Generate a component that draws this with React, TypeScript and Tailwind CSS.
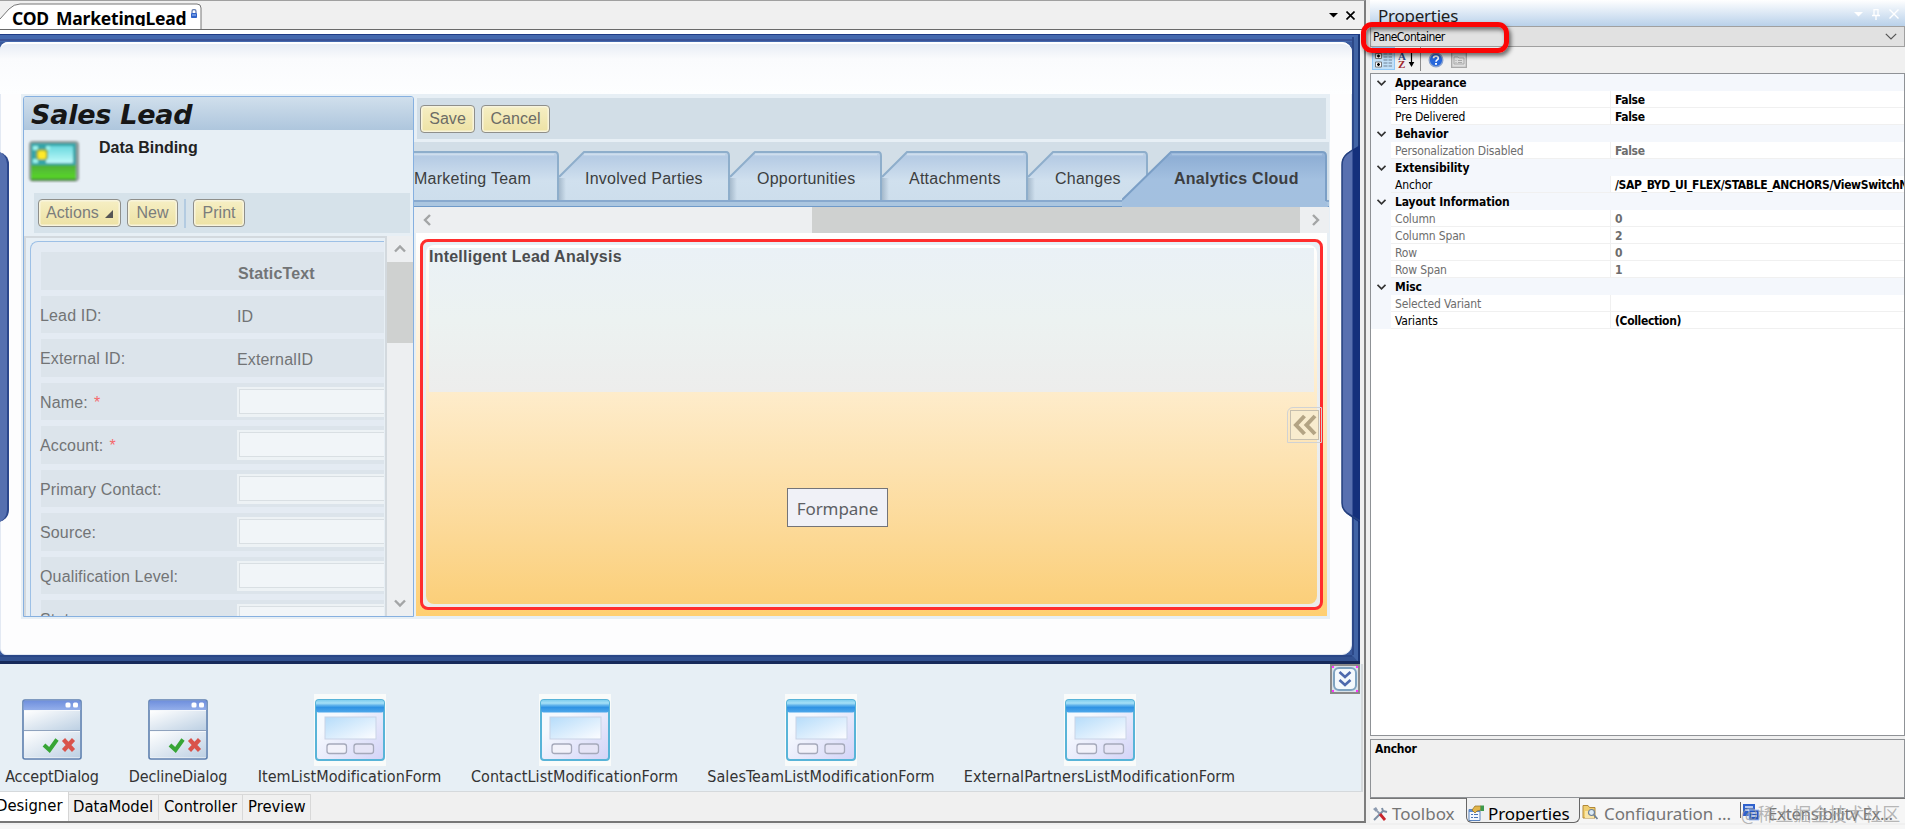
import type { ReactNode } from "react"

const TAHOMA = "font-['DejaVu_Sans_Condensed','DejaVu_Sans',sans-serif]"
const SEGOE = "font-['Noto_Sans',sans-serif]"

type FormRow = { label: string; kind: "header" | "text" | "input"; value?: string; required?: boolean }

const formRows: FormRow[] = [
  { label: "", kind: "header", value: "StaticText" },
  { label: "Lead ID:", kind: "text", value: "ID" },
  { label: "External ID:", kind: "text", value: "ExternalID" },
  { label: "Name:", kind: "input", required: true },
  { label: "Account:", kind: "input", required: true },
  { label: "Primary Contact:", kind: "input" },
  { label: "Source:", kind: "input" },
  { label: "Qualification Level:", kind: "input" },
  { label: "Status:", kind: "input" },
]

const viewTabs = [
  { label: "Marketing Team", width: 145, pad: "pl-0", first: true },
  { label: "Involved Parties", width: 171, pad: "pl-[26px]" },
  { label: "Opportunities", width: 152, pad: "pl-[27px]" },
  { label: "Attachments", width: 146, pad: "pl-[27px]" },
  { label: "Changes", width: 120, pad: "pl-[27px]" },
]

const trayItems = [
  { label: "AcceptDialog", width: "w-[94px]", dialog: true },
  { label: "DeclineDialog", width: "w-[98px]", dialog: true },
  { label: "ItemListModificationForm", width: "w-[185px]" },
  { label: "ContactListModificationForm", width: "w-[205px]" },
  { label: "SalesTeamListModificationForm", width: "w-[228px]" },
  { label: "ExternalPartnersListModificationForm", width: "w-[269px]" },
]

type PropRow = { name: string; value?: string; category?: boolean; muted?: boolean; active?: boolean }

const propRows: PropRow[] = [
  { name: "Appearance", category: true },
  { name: "Pers Hidden", value: "False" },
  { name: "Pre Delivered", value: "False" },
  { name: "Behavior", category: true },
  { name: "Personalization Disabled", value: "False", muted: true },
  { name: "Extensibility", category: true },
  { name: "Anchor", value: "/SAP_BYD_UI_FLEX/STABLE_ANCHORS/ViewSwitchNavigation", active: true },
  { name: "Layout Information", category: true },
  { name: "Column", value: "0", muted: true },
  { name: "Column Span", value: "2", muted: true },
  { name: "Row", value: "0", muted: true },
  { name: "Row Span", value: "1", muted: true },
  { name: "Misc", category: true },
  { name: "Selected Variant", value: "", muted: true },
  { name: "Variants", value: "(Collection)" },
]

function Chevron({ d, className = "" }: { d: string; className?: string }) {
  return (
    <svg width="14" height="14" viewBox="0 0 14 14" className={className} fill="none" stroke="#a3a5a6" strokeWidth="2.4">
      <path d={d} />
    </svg>
  )
}

function SapButton({ children, className = "" }: { children: ReactNode; className?: string }) {
  return (
    <div
      className={`flex h-7 items-center justify-center rounded border-[1.5px] border-[#8f8f8b] bg-gradient-to-b from-[#f6efc4] to-[#ede2a4] text-base tracking-[0.050px] shadow-[inset_0_0_0_1.5px_#f8f4dc] ${className}`}
    >
      {children}
    </div>
  )
}

function PictureIcon() {
  return (
    <svg width="54" height="44" viewBox="0 0 54 44">
      <defs>
        <linearGradient id="sky" x1="0" y1="0" x2="0" y2="1">
          <stop offset="0" stopColor="#69d8de" />
          <stop offset="1" stopColor="#c0fafa" />
        </linearGradient>
        <linearGradient id="grass" x1="0" y1="0" x2="0" y2="1">
          <stop offset="0" stopColor="#4fae3a" />
          <stop offset="1" stopColor="#5ad927" />
        </linearGradient>
        <filter id="soft">
          <feGaussianBlur stdDeviation="0.9" />
        </filter>
      </defs>
      <g filter="url(#soft)">
        <rect x="2" y="2" width="50" height="40.500" rx="4" fill="#8f9a98" />
        <rect x="4" y="4" width="45" height="22" rx="1" fill="#36a4a8" />
        <rect x="19" y="7" width="27" height="17" rx="1" fill="url(#sky)" />
        <path d="M6 7h5v4H6zM6 20h5v4H6zM19 7h4v4h-4z" fill="#9af3ee" />
        <path d="M4 26h45v14H4z" fill="url(#grass)" />
        <path d="M4 39.500h45v2H4z" fill="#43912b" />
        <rect x="9" y="10" width="12" height="11" rx="3" fill="#8fae3c" />
        <rect x="11" y="12" width="8" height="8" rx="2" fill="#ffe92c" />
      </g>
    </svg>
  )
}

function SalesLeadPanel() {
  return (
    <div className="flex h-[521px] w-[391px] flex-col overflow-hidden rounded-t-[3px] border border-[#86b0e0] bg-[#e7eff5]">
      <div className="h-[33px] shrink-0 bg-gradient-to-b from-[#d0dfec] to-[#aec6dd] pl-[7px]">
        <span className="block font-['DejaVu_Sans'] text-[27px] leading-[35px] font-bold tracking-[-0.250px] text-[#161616] italic">
          Sales Lead
        </span>
      </div>
      <div className="flex h-[63px] shrink-0 pl-[3px]">
        <div className="pt-[9px]">
          <PictureIcon />
        </div>
        <div className="pt-[8px] pl-[18px] text-base leading-[19px] font-bold text-[#222]">Data Binding</div>
      </div>
      <div className="mr-[3px] ml-[10px] flex h-10 shrink-0 items-center bg-[#d6e2ea] pl-1 text-[#7b7d7c]">
        <SapButton className="w-[83px] gap-1.5">
          Actions
          <svg width="8" height="8" viewBox="0 0 8 8" className="mt-0.5">
            <path d="M8 0v8H0z" fill="#555" />
          </svg>
        </SapButton>
        <SapButton className="ml-1.5 w-[51px]">New</SapButton>
        <div className="ml-[6px] h-[29px] w-0.5 bg-[#b3cbe1]" />
        <SapButton className="ml-[7px] w-[52px]">Print</SapButton>
      </div>
      <div className="mt-[3px] flex min-h-0 flex-1">
        <div className="flex min-w-0 flex-1 overflow-hidden border-t-2 border-r-2 border-l-2 border-[#d3d9de] pt-[3px] pl-[4px]">
          <div className="mr-px flex h-[500px] flex-1 flex-col gap-1.5 rounded-tl-lg border-t border-l border-[#9dc0e6] bg-[#e4ebf3] pt-[10px] pl-[10px]">
            {formRows.map((row, i) => (
              <div key={i} className="flex h-[37.500px] shrink-0 bg-[#dce4eb] text-base tracking-[0.150px] text-[#727476]">
                <div className="-ml-px w-[197px] pt-[10px] leading-[19px] whitespace-nowrap">
                  {row.label}
                  {row.required && <span className="ml-[6px] text-[#f5686c]">*</span>}
                </div>
                {row.kind === "input" ? (
                  <div className="mt-1 h-[30px] flex-1 border-t-2 border-b-[3px] border-l-2 border-[#edf2f5] bg-[#f1f5f8]">
                    <div className="h-full border-t border-b border-l border-[#d9dfe3]" />
                  </div>
                ) : (
                  <div
                    className={
                      row.kind === "header"
                        ? "pt-[12px] pl-px text-base leading-[19px] font-bold"
                        : "pt-[12px] leading-[18px]"
                    }
                  >
                    {row.value}
                  </div>
                )}
              </div>
            ))}
          </div>
        </div>
        <div className="flex w-[26px] flex-col items-center bg-[#edeff1]">
          <div className="flex h-[26px] items-center">
            <Chevron d="M2 9.500l5-5 5 5" />
          </div>
          <div className="h-[81px] w-full bg-[#cfd1d0]" />
          <div className="flex-1" />
          <div className="flex h-[26px] items-center">
            <Chevron d="M2 4.500l5 5 5-5" />
          </div>
        </div>
      </div>
    </div>
  )
}

function TabShape({ width, first }: { width: number; first?: boolean }) {
  const outline = first
    ? `M0 1H${width - 4}q3 0 3 4V49`
    : `M0 49V26L25 1H${width - 4}q3 0 3 4V49`
  return (
    <svg width={width} height="49" className="absolute top-0 left-0">
      <defs>
        <linearGradient id="tabFill" x1="0" y1="0" x2="0" y2="1">
          <stop offset="0" stopColor="#c7d8ea" />
          <stop offset="0.100" stopColor="#b5cbe4" />
          <stop offset="0.600" stopColor="#d0e0ee" />
          <stop offset="1" stopColor="#cddeec" />
        </linearGradient>
        <linearGradient id="tabShade" x1="0" y1="0" x2="1" y2="0">
          <stop offset="0" stopColor="#93a9bd" stopOpacity="0.700" />
          <stop offset="1" stopColor="#93a9bd" stopOpacity="0" />
        </linearGradient>
      </defs>
      <path d={`${outline}${first ? "H0z" : "z"}`} fill="url(#tabFill)" />
      {!first && <path d="M0 27h7v22H0z" fill="url(#tabShade)" />}
      <path d={first ? outline : `M0 26L25 1H${width - 4}q3 0 3 4V49`} fill="none" stroke="#8eaecb" strokeWidth="2" />
      <path d={first ? `M0 3.500H${width - 5}` : `M25 3.500H${width - 5}`} stroke="#cfdeed" strokeWidth="1.500" />
    </svg>
  )
}

function ViewTabs() {
  return (
    <div className="flex h-[65px] flex-col bg-[#d2dee7] pt-[9px]">
      <div className="relative flex h-[49px] text-base text-[#3c3e40]">
        {viewTabs.map((tab) => (
          <div
            key={tab.label}
            className={`relative shrink-0 leading-[55px] tracking-[0.250px] whitespace-nowrap ${tab.pad}`}
            style={{ width: tab.width }}
          >
            <TabShape width={tab.width} first={tab.first} />
            <span className="relative">{tab.label}</span>
          </div>
        ))}
        <div className="relative flex-1 pl-[26px] text-base leading-[55px] font-bold tracking-[0.250px]">
          <svg width="206" height="56" className="absolute top-0 -left-[26px]">
            <defs>
              <linearGradient id="activeTab" x1="0" y1="0" x2="0" y2="1">
                <stop offset="0" stopColor="#9db9dc" />
                <stop offset="0.100" stopColor="#8fafd5" />
                <stop offset="0.500" stopColor="#a3c0e0" />
                <stop offset="1" stopColor="#a3c0df" />
              </linearGradient>
            </defs>
            <path d="M0 56V49L49 1H200q4 0 4 4V50l2 6z" fill="url(#activeTab)" />
            <path d="M0 49L49 1H200q4 0 4 4V50" fill="none" stroke="#7b9fc6" strokeWidth="2" />
            <path d="M50 3.500H200" stroke="#a9c4e1" strokeWidth="1.500" />
          </svg>
          <span className="relative">Analytics Cloud</span>
        </div>
      </div>
      <div className="h-[7px] border-t-2 border-b border-t-[#88a9ce] border-b-[#6f9ac9] bg-[#abc6e0]" />
    </div>
  )
}

function AnalysisPane() {
  return (
    <div className="mr-[2px] ml-[2px] h-[383px] bg-gradient-to-b from-white to-[#ffcf71] px-1 pt-[6px] pb-[6px]">
      <div className="h-[371px] rounded-lg border-[3px] border-[#ff2d2d] bg-gradient-to-b from-[#e8eff5] to-[#ececea] px-[3px] pt-[3px] pb-[3px]">
        <div className="relative h-full rounded-lg bg-gradient-to-b from-white to-[#fbcf79] px-[3px] pt-[3px]">
          <div className="h-[144px] bg-gradient-to-b from-[#eaf1f6] via-[#ecf2f1] to-[#ededec] text-base leading-[18px] font-bold tracking-[0.230px] text-[#4a4c4e]">
            Intelligent Lead Analysis
          </div>
          <div className="absolute top-[162px] -right-[5px] h-[36px] w-[35px] rounded-tl-md border border-[#d0d2d4] p-[2px]">
            <div className="flex h-full items-center justify-center border border-[#c6bfae] bg-[#f8ecce]">
              <svg width="25" height="22" viewBox="0 0 25 22" fill="none" stroke="#b3a484" strokeWidth="4">
                <path d="M12.500 2L4 11l8.500 9M23 2l-8.500 9 8.500 9" />
              </svg>
            </div>
          </div>
          <div
            className={`absolute top-[243px] left-[361px] flex h-[39px] w-[101px] items-center justify-center border-[1.5px] border-[#747478] bg-[#f0f1f7] pt-0.5 text-[17px] tracking-[-0.050px] text-[#5d6064] ${SEGOE}`}
          >
            Formpane
          </div>
        </div>
      </div>
    </div>
  )
}

function MainForm() {
  return (
    <div className="relative ml-[21px] flex h-[525px] w-[1309px] bg-[#e7eff5] pt-[2px] pl-[2px] font-['Liberation_Sans',sans-serif]">
      <SalesLeadPanel />
      <div className="min-w-0 flex-1">
        <div className="mt-[2px] mr-[4px] ml-[3px] flex h-[41px] items-center gap-1.5 bg-[#d2dee7] pl-[3px] text-[#6c6c66]">
          <SapButton className="w-[55px]">Save</SapButton>
          <SapButton className="w-[69px]">Cancel</SapButton>
        </div>
        <div className="mt-[3px] mr-px">
          <ViewTabs />
          <div className="flex h-[26px] items-center bg-[#edeff1]">
            <Chevron d="M9 2L4 7l5 5" className="ml-[7px]" />
            <div className="flex-1" />
            <div className="h-full w-[488px] bg-[#cfd1d0]" />
            <Chevron d="M5 2l5 5-5 5" className="mr-[7px] ml-2" />
          </div>
          <AnalysisPane />
        </div>
      </div>
    </div>
  )
}

function DialogIcon() {
  return (
    <svg width="60" height="61" viewBox="0 0 60 61">
      <defs>
        <linearGradient id="dlgBar" x1="0" y1="0" x2="0" y2="1">
          <stop offset="0" stopColor="#6f8fdd" />
          <stop offset="1" stopColor="#93aeea" />
        </linearGradient>
        <linearGradient id="dlgBody" x1="0" y1="0" x2="1" y2="1">
          <stop offset="0" stopColor="#fff" />
          <stop offset="1" stopColor="#bdd0e3" />
        </linearGradient>
      </defs>
      <rect x="1" y="1" width="58" height="59" rx="2" fill="#f5f8fb" stroke="#5d7fae" strokeWidth="1.600" />
      <rect x="1.500" y="1.500" width="57" height="9.500" fill="url(#dlgBar)" />
      <rect x="43.500" y="3.500" width="5" height="5" rx="1.500" fill="#fff" />
      <rect x="51" y="3.500" width="5" height="5" rx="1.500" fill="#fff" />
      <rect x="2" y="12" width="56" height="19" fill="url(#dlgBody)" />
      <path d="M2 31.500h56" stroke="#8fa2bd" />
      <rect x="2" y="33" width="56" height="25.500" fill="url(#dlgBody)" />
      <path d="M22 46l5.500 5L35 40.500" fill="none" stroke="#37a535" strokeWidth="4" />
      <path d="M41.500 40.500l10 11M51.500 40.500l-10 11" stroke="#d9534b" strokeWidth="4.200" />
    </svg>
  )
}

function FormIcon() {
  return (
    <svg width="72" height="72" viewBox="0 0 72 72">
      <defs>
        <linearGradient id="frmBar" x1="0" y1="0" x2="0" y2="1">
          <stop offset="0" stopColor="#7fcdee" />
          <stop offset="0.250" stopColor="#a5e0f7" />
          <stop offset="0.450" stopColor="#58aeea" />
          <stop offset="0.600" stopColor="#2f93e4" />
          <stop offset="1" stopColor="#4fa8ea" />
        </linearGradient>
        <linearGradient id="frmBody" x1="0" y1="0" x2="1" y2="1">
          <stop offset="0.300" stopColor="#f5f9fe" />
          <stop offset="1" stopColor="#d3d3f7" />
        </linearGradient>
        <linearGradient id="frmPic" x1="0" y1="0" x2="1" y2="1">
          <stop offset="0" stopColor="#b5dcfa" />
          <stop offset="1" stopColor="#fdfdff" />
        </linearGradient>
      </defs>
      <path d="M0 0h72v72H0z" fill="#f9fbfa" />
      <rect x="2" y="6" width="68" height="60" rx="3" fill="url(#frmBody)" stroke="#58b4d8" strokeWidth="2" />
      <rect x="2" y="6" width="68" height="12.500" rx="2.500" fill="url(#frmBar)" />
      <rect x="11" y="23" width="51" height="22" fill="url(#frmPic)" stroke="#c9d3e6" />
      <rect x="13" y="50" width="19.500" height="9.500" rx="2.500" fill="#f2f2fa" stroke="#a5a9ba" strokeWidth="1.300" />
      <rect x="40" y="50" width="19.500" height="9.500" rx="2.500" fill="#e6e5f6" stroke="#a5a9ba" strokeWidth="1.300" />
    </svg>
  )
}

function ComponentTray() {
  return (
    <div className="relative mr-px flex h-[128px] gap-[30px] border-r-2 border-b border-[#d5d9dc] bg-[#e7eff5] pl-[5px]">
      {trayItems.map((item) => (
        <div key={item.label} className={`flex shrink-0 flex-col items-center ${item.width}`}>
          <div className={item.dialog ? "h-[102px] pt-[35px]" : "h-[102px] pt-[30px]"}>
            {item.dialog ? <DialogIcon /> : <FormIcon />}
          </div>
          <span
            className={`text-base leading-[21px] whitespace-nowrap text-[#333] ${item.dialog ? "tracking-[-0.100px]" : "tracking-[0.080px]"} ${TAHOMA}`}
          >
            {item.label}
          </span>
        </div>
      ))}
      <div className="absolute top-0 right-px h-[30px] w-[30px] border-2 border-[#8a8a8a] bg-[#d9e2e8] p-px">
        <div className="flex h-full items-center justify-center rounded-md border-2 border-[#7fa3c0] bg-[#f4f9fc]">
          <svg width="14" height="18" viewBox="0 0 14 18" fill="none" stroke="#4d69ad" strokeWidth="2.600">
            <path d="M1.500 2L7 7l5.500-5M1.500 10L7 15l5.500-5" />
          </svg>
        </div>
        <i className="absolute top-0 left-0 size-[2px] bg-[#f3f]" />
        <i className="absolute top-0 right-0 size-[2px] bg-[#f3f]" />
        <i className="absolute bottom-0 left-0 size-[2px] bg-[#f3f]" />
        <i className="absolute right-0 bottom-0 size-[2px] bg-[#f3f]" />
      </div>
    </div>
  )
}

// blue grips on both sides of the work area
function SideGrip({ side }: { side: "left" | "right" }) {
  return side === "left" ? (
    <div className="absolute top-[110px] left-0 h-[370px] w-[10px] overflow-hidden">
      <div className="ml-[-16px] h-full w-[25px] rounded-xl border-r-2 border-[#2b478c] bg-[#5570b0]" />
    </div>
  ) : (
    <div className="absolute top-[103px] right-0 h-[380px] w-[19px]">
      <svg width="19" height="380" viewBox="0 0 19 380">
        <path d="M19 0L6 8Q1 12 1 20V358Q1 365 6 369L19 378z" fill="#14307c" />
        <path d="M11.500 5L6 9Q1 13 1 20V358Q1 364 6 368L11.500 371z" fill="#5870b0" />
        <path d="M11.500 5L6 9Q1 13 1 20V358Q1 364 6 368L19 376" fill="none" stroke="#24407f" strokeWidth="1.500" />
      </svg>
    </div>
  )
}

function DesignerTabs() {
  return (
    <div className={`flex h-[29px] text-[16.500px] leading-[23px] whitespace-nowrap text-black ${TAHOMA}`}>
      <div className="w-[69px] overflow-hidden border-r border-[#d5d5d5] bg-white">
        <span className="-ml-1 block leading-[28px]">Designer</span>
      </div>
      <div className="mt-[2px] h-[26px] w-[90px] border-t border-r border-[#d8d8d8] pl-1">DataModel</div>
      <div className="mt-[2px] h-[26px] w-[84px] border-t border-r border-[#d8d8d8] pl-[5px]">Controller</div>
      <div className="mt-[2px] h-[26px] w-[68px] border-t border-r border-[#d8d8d8] pl-[5px]">Preview</div>
    </div>
  )
}

function Workspace() {
  return (
    <div className="flex h-[823px] w-[1366px] flex-col border-t border-r-2 border-b-2 border-t-[#a0a0a0] border-r-[#7d7d7d] border-b-[#777] bg-[#f0f0f0]">
      <div className="relative flex h-[29px] shrink-0 justify-between border-b border-[#6a6a6a]">
        <svg width="202" height="28" className="absolute top-0 left-0">
          <path d="M0 18L9 8q5-5 11-5H197q4 0 4 4V28H0z" fill="#fff" />
          <path d="M0 18L9 8q5-5 11-5H197q4 0 4 4V28" fill="none" stroke="#777" />
        </svg>
        <div className={`relative h-[25px] overflow-hidden pl-[12px] text-[17.500px] leading-[34px] font-bold tracking-[-0.200px] ${SEGOE}`}>
          COD_MarketingLead
        </div>
        <svg width="8" height="10" viewBox="0 0 8 10" className="absolute top-2 left-[190px]">
          <path d="M2 4V2.500a2 2 0 0 1 4 0V4" fill="none" stroke="#6b83b5" strokeWidth="1.300" />
          <rect x="1" y="4" width="6" height="5" rx="0.800" fill="#2f63c9" />
          <path d="M2 6h4" stroke="#a9c4f5" />
        </svg>
        <div className="flex items-center gap-2 pr-[9px]">
          <svg width="9" height="5" viewBox="0 0 9 5">
            <path d="M0 0h9L4.500 4.500z" />
          </svg>
          <svg width="9" height="9" viewBox="0 0 9 9" stroke="#000" strokeWidth="1.600">
            <path d="M.5.5l8 8M8.500.5l-8 8" />
          </svg>
        </div>
      </div>
      <div className="h-1 shrink-0 bg-white" />
      <div className="relative mr-[4px] h-[630px] shrink-0 border-t-8 border-r-8 border-b-[9px] border-t-[#4569ae] border-r-[#4164a5] border-b-[#325190] bg-[#3a5a9d]">
        <div className="absolute inset-0 rounded-tl-lg rounded-tr-[10px] rounded-br-[10px] rounded-bl-md border border-[#e3e9f3] bg-[#fdfdfe]" />
        <div className="relative h-[52px] rounded-tl-lg rounded-tr-[10px] border-t-2 border-white bg-gradient-to-b from-[#e8edf5] via-[#fafbfd] via-30% to-[#fdfeff]" />
        <MainForm />
        <i className="absolute -top-2 -right-2 left-0 h-px bg-[#1f3c86]" />
        <i className="absolute -top-[3px] right-0 left-0 h-[2px] bg-[#3a5295]" />
        <i className="absolute -top-[5px] -right-[2px] bottom-0 w-[2px] bg-[#2c4888]" />
        <i className="absolute -top-[7px] -right-2 -bottom-2 w-[2px] bg-[#1c3877]" />
        <i className="absolute right-0 -bottom-[2px] left-0 h-[2px] bg-[#2a4787]" />
        <i className="absolute -right-2 -bottom-[9px] left-0 h-[3px] bg-[#16295a]" />
        <div className="absolute inset-y-0 -right-2 w-[20px]">
          <SideGrip side="right" />
        </div>
        <SideGrip side="left" />
      </div>
      <div>
        <ComponentTray />
        <DesignerTabs />
      </div>
    </div>
  )
}

function PropertyGrid() {
  return (
    <div className={`h-[663px] overflow-hidden border border-[#8f9296] bg-white text-xs text-black ${TAHOMA}`}>
      {propRows.map((row) => (
        <div key={row.name} className="flex h-[17px] bg-[#f4f7fc] leading-[18px] whitespace-nowrap">
          <div className="flex w-5 shrink-0 items-center justify-center">
            {row.category && (
              <svg width="9" height="6" viewBox="0 0 9 6" fill="none" stroke="#333" strokeWidth="1.700">
                <path d="M.5.8l4 4 4-4" />
              </svg>
            )}
          </div>
          {row.category ? (
            <div className="flex-1 pl-1 font-bold tracking-[-0.100px]">{row.name}</div>
          ) : (
            <>
              <div
                className={`w-[220px] shrink-0 border-r border-b border-[#f0f0f0] pl-1 tracking-[-0.150px] ${row.active ? "" : "bg-white"} ${row.muted ? "text-[#6d6d6d]" : ""}`}
              >
                {row.name}
              </div>
              <div
                className={`min-w-0 flex-1 overflow-hidden border-b border-[#f0f0f0] bg-white pl-1 font-bold tracking-[-0.350px] ${row.muted ? "text-[#6d6d6d]" : ""}`}
              >
                {row.value}
              </div>
            </>
          )}
        </div>
      ))}
    </div>
  )
}

function GridToolbar() {
  return (
    <div className="flex h-[26px] shrink-0 items-start pl-[2px]">
      <div className="h-[23px] w-[23px] border border-[#90c8f6] bg-[#c2e0f7] pt-[4px] pl-[2px]">
        <svg width="18" height="16" viewBox="0 0 18 16">
          <path d="M.5 1.500h6v5h-6zM.5 10h6v5h-6z" fill="#fff" stroke="#777" />
          <path d="M2 4h3M3.500 2.500v3M2 12.500h3M3.500 11v3" stroke="#000" strokeWidth="1.300" />
          <path d="M8.500 2h4M8.500 5h4M8.500 8h4M8.500 11h4M8.500 14h4M13.500 2H17M13.500 5H17M13.500 8H17M13.500 11H17M13.500 14H17" stroke="#6f8296" />
        </svg>
      </div>
      <div className="ml-[3px] flex pt-[5px]">
        <div className="w-[8px] font-['Liberation_Serif'] text-[11px] leading-[8px] font-bold">
          <div className="text-[#2c4a8a]">A</div>
          <div className="text-[#a0282c]">Z</div>
        </div>
        <svg width="7" height="16" viewBox="0 0 7 16" className="ml-0.5">
          <path d="M3.500 0v12" stroke="#000" strokeWidth="1.200" />
          <path d="M.7 10h5.600l-2.800 5z" />
        </svg>
      </div>
      <div className="ml-[5px] h-6 w-px bg-[#8d8d8d]" />
      <svg width="16" height="16" viewBox="0 0 16 16" className="mt-[5px] ml-[7px]">
        <circle cx="8" cy="8" r="6.800" fill="#2767dc" stroke="#8ba3cf" strokeWidth="1.400" />
        <path d="M5.500 6.300c.2-3 5-2.800 4.800 0 0 1.700-2.300 1.600-2.300 3.500" fill="none" stroke="#fff" strokeWidth="1.700" />
        <path d="M7 11h2v1.800H7z" fill="#fff" />
      </svg>
      <svg width="16" height="16" viewBox="0 0 16 16" className="mt-[5px] ml-[7px]" fill="none" stroke="#a9a9a9">
        <path d="M.5.5h15v15H.5z" fill="#dedede" strokeWidth="1.600" />
        <path d="M3 5h4l1 1h5v6H3zM4.500 8.500h1M7 8.500h4M4.500 10.500h1M7 10.500h4" />
      </svg>
    </div>
  )
}

function ToolTabs() {
  return (
    <div className={`relative flex h-[25px] shrink-0 border-t border-[#777] bg-[#f6f6f6] text-[17px] leading-[30px] whitespace-nowrap text-[#757575] ${SEGOE}`}>
      <div className="flex h-[22px] w-[96px] overflow-hidden pl-[2px]">
        <svg width="16" height="16" viewBox="0 0 16 16" className="mt-[7px] mr-1" fill="none">
          <path d="M2 14l9-9" stroke="#7d8ea3" strokeWidth="2" />
          <path d="M1 3l3-2 2 3-2 2z" fill="#8d9bb0" />
          <path d="M5 5l4 4" stroke="#8d9bb0" strokeWidth="1.800" />
          <path d="M8 8l5 6" stroke="#c9252c" strokeWidth="2.800" />
          <path d="M10 2l1 3 4 1" stroke="#7d8ea3" strokeWidth="2" />
        </svg>
        <span>Toolbox</span>
      </div>
      <div className="-mt-px flex h-[25px] w-[114px] rounded-b-md border-r border-b border-l border-[#666] bg-[#f0f0f0] pl-px">
        <div className="flex h-[23px] overflow-hidden text-black">
          <svg width="16" height="16" viewBox="0 0 16 16" className="mt-[7px] mr-1">
            <path d="M1 4.500h11v11H1z" fill="#f4f8fd" stroke="#5b83bd" />
            <path d="M1 4.500h11V7H1z" fill="#5b8bd0" />
            <path d="M3 9.500h2M6 9.500h4M3 12.500h2M6 12.500h4" stroke="#4a74b4" strokeWidth="1.200" />
            <path d="M4 5l3-4 6 0v4L9 6 7 8z" fill="#e2b54a" stroke="#8c6b1e" strokeWidth=".7" />
            <path d="M12.500.5H16V6h-3.500z" fill="#3c9a4c" />
          </svg>
          <span className="leading-[32px] tracking-[-0.100px]">Properties</span>
        </div>
      </div>
      <div className="flex h-[22px] w-[160px] overflow-hidden pl-[2px]">
        <svg width="16" height="16" viewBox="0 0 16 16" className="mt-[5px] mr-[6px]">
          <path d="M1 1.500h5l1.500 2H13V14H1z" fill="#f0ce6e" stroke="#b2893a" />
          <path d="M3 7h9v7H3z" fill="#f9e5a8" />
          <circle cx="9.500" cy="8.500" r="3" fill="#dcebf7" stroke="#6d8198" strokeWidth="1.200" />
          <path d="M12 11l3.500 4" stroke="#6d8198" strokeWidth="1.800" />
        </svg>
        <span className="tracking-[-0.080px]">Configuration ...</span>
      </div>
      <div className="mt-[3px] h-4 w-px bg-[#666]" />
      <div className="flex h-[22px] overflow-hidden">
        <svg width="17" height="17" viewBox="0 0 17 17" className="mt-[5px] mr-[8px] ml-0.5">
          <path d="M0 0h12v12H0z" fill="#2f62cd" />
          <path d="M6 6h10v10H6z" fill="#2555bd" stroke="#a5c0f0" />
          <path d="M2 3h8M2 6h4M8 9h6M8 12h6" stroke="#dfe9fb" strokeWidth="1.300" />
        </svg>
        <span className="tracking-[-0.400px]">Extensibility Ex...</span>
      </div>
      <div className="absolute top-px right-[5px] font-['Noto_Sans_CJK_SC',sans-serif] text-[18px] leading-[26px] tracking-[-0.200px] text-[#999]/70">
        @稀土掘金技术社区
      </div>
    </div>
  )
}

function PropertiesPanel() {
  return (
    <div className="ml-[4px] flex h-[823px] min-w-0 flex-1 flex-col">
      <div className="flex h-[26px] shrink-0 justify-between bg-gradient-to-b from-white to-[#b9d1ea] pl-[8px]">
        <div className={`h-[23px] overflow-hidden text-[17px] leading-[32px] tracking-[-0.250px] text-[#1e1e1e] ${SEGOE}`}>
          Properties
        </div>
        <div className="flex items-center gap-[9px] pt-0.5 pr-1.5">
          <svg width="9" height="5" viewBox="0 0 9 5">
            <path d="M0 0h9L4.500 4.500z" fill="#fff" />
          </svg>
          <svg width="8" height="11" viewBox="0 0 8 11" fill="none" stroke="#fff" strokeWidth="1.300">
            <path d="M2 6V.6h4V6M0 6.500h8M4 6.500V11" />
          </svg>
          <svg width="10" height="10" viewBox="0 0 10 10" stroke="#fff" strokeWidth="1.400">
            <path d="M.5.5l9 9M9.500.5l-9 9" />
          </svg>
        </div>
      </div>
      <div
        className={`relative flex h-[21px] shrink-0 items-center justify-between border border-[#a0a0a0] bg-[#e1e1e1] pr-[7px] pl-[2px] text-xs tracking-[-0.550px] text-black ${TAHOMA}`}
      >
        PaneContainer
        <svg width="12" height="7" viewBox="0 0 12 7" fill="none" stroke="#555" strokeWidth="1.200">
          <path d="M.8.8L6 6 11.200.8" />
        </svg>
        <div className="absolute -top-[5px] -left-[10px] z-10 h-[31px] w-[148px] rounded-[11px] border-[5px] border-[#fb0505] shadow-[2px_3px_4px_rgba(0,0,0,0.550),inset_2px_3px_4px_rgba(0,0,0,0.500)]" />
      </div>
      <GridToolbar />
      <PropertyGrid />
      <div className={`mt-[3px] h-[59px] shrink-0 border border-[#8f9296] pl-1 text-xs leading-[18px] font-bold tracking-[-0.200px] text-black ${TAHOMA}`}>
        Anchor
      </div>
      <ToolTabs />
    </div>
  )
}

export default function App() {
  return (
    <div className="h-[829px] w-[1905px] overflow-hidden bg-[#f6f6f6]">
      <div className="flex h-[825px] bg-[#f0f0f0]">
        <Workspace />
        <PropertiesPanel />
      </div>
    </div>
  )
}
